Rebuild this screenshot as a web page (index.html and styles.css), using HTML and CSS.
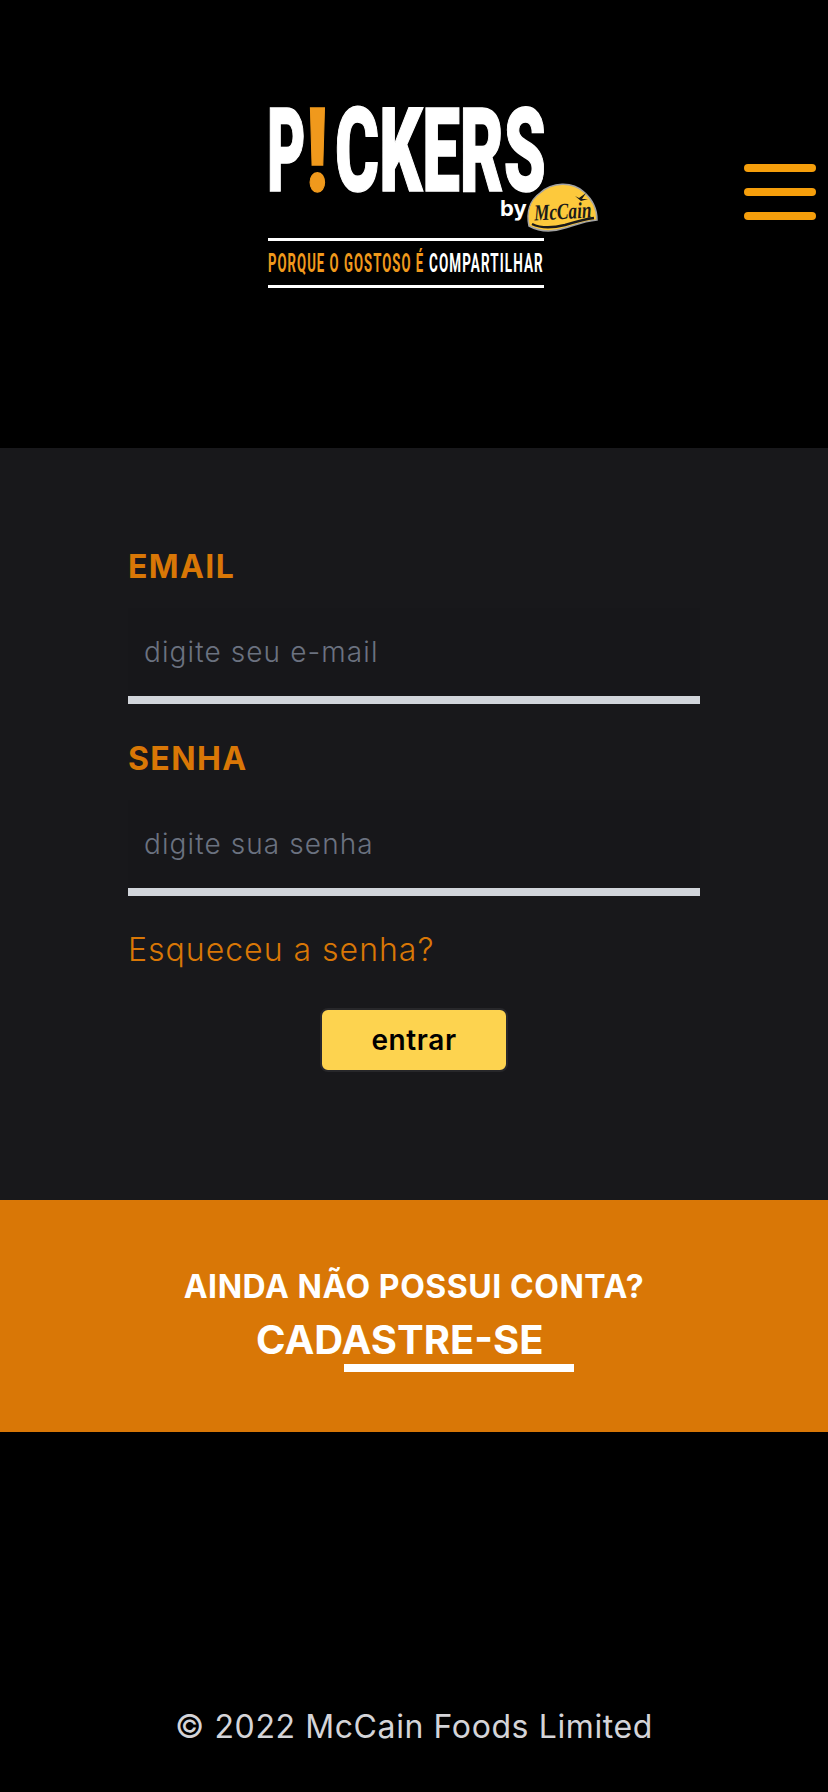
FILE: index.html
```html
<!DOCTYPE html>
<html lang="pt-BR">
<head>
    <meta charset="UTF-8">
    <meta name="viewport" content="width=device-width, initial-scale=1.0">
    <title>Pickers by McCain</title>
    <link rel="stylesheet" href="styles.css">
</head>
<body>
    <header class="site-header">
        <svg class="logo" viewBox="264 60 340 240" role="img" aria-label="Pickers by McCain">
            <text class="logo-word" transform="translate(267 191) scale(.51 1)">P</text>
            <text class="logo-mark" transform="translate(306 191) scale(.69 1)">!</text>
            <text class="logo-word" transform="translate(335 191) scale(.58 1)">CKERS</text>
            <text class="logo-by" x="500" y="216">by</text>
            <path class="dome" d="M529 226 C526 212 530 200 540 193 C552 182 572 181 584 192 C592 199 597 208 597 220 C585 221 575 225 565 228 C553 232 540 232 529 226 Z"/>
            <path class="dome-wave" d="M532 224 C542 229 553 228 565 225 C575 222 585 219 594 218"/>
            <path class="dome-bird" d="M575 196 L579 198 L586 193 L582 199 L588 199 L581 201 Z"/>
            <text class="logo-mccain" transform="rotate(-3 563 212) translate(534 219) scale(.75 1)">McCain</text>
            <rect class="logo-rule" x="268" y="238" width="276" height="3"/>
            <text class="logo-tag tag-orange" transform="translate(268 272) scale(.525 1)">PORQUE O GOSTOSO É</text>
            <text class="logo-tag" transform="translate(429 272) scale(.54 1)">COMPARTILHAR</text>
            <rect class="logo-rule" x="268" y="285" width="276" height="3"/>
        </svg>
        <button class="menu-toggle" type="button" aria-label="Menu">
            <span></span>
            <span></span>
            <span></span>
        </button>
    </header>

    <main class="login-section">
        <form class="login-form">
            <div class="form-group">
                <label for="email">EMAIL</label>
                <input type="email" id="email" name="email" placeholder="digite seu e-mail">
            </div>
            <div class="form-group">
                <label for="password">SENHA</label>
                <input type="password" id="password" name="password" placeholder="digite sua senha">
            </div>
            <a class="forgot-link" href="#">Esqueceu a senha?</a>
            <button class="submit-btn" type="submit">entrar</button>
        </form>
    </main>

    <section class="signup-band">
        <p class="signup-question">AINDA NÃO POSSUI CONTA?</p>
        <a class="signup-link" href="#">
            <span class="signup-text">CADASTRE-SE</span>
            <span class="signup-line"></span>
        </a>
    </section>

    <footer class="site-footer">© 2022 McCain Foods Limited</footer>
</body>
</html>
```

FILE: styles.css
```css
:root {
    --orange: #d97706;
    --panel: #18181b;
}

* {
    box-sizing: border-box;
}

body {
    margin: 0;
    min-height: 1792px;
    display: flex;
    flex-direction: column;
    background-color: #000;
    font-family: Inter, "Open Sans", sans-serif;
}

.site-header {
    height: 448px;
    padding: 60px 12px 0 264px;
    display: flex;
    justify-content: space-between;
    align-items: flex-start;
}

.logo {
    width: 340px;
    height: 240px;
}

.logo-word {
    font-family: Roboto, sans-serif;
    font-weight: 900;
    font-size: 116px;
    fill: #fff;
    stroke: #fff;
    stroke-width: 1.5;
}

.logo-mark {
    font-family: Roboto, sans-serif;
    font-weight: 900;
    font-size: 116px;
    fill: #f0991c;
    stroke: #f0991c;
    stroke-width: 1.5;
}

.logo-by {
    font-weight: 700;
    font-size: 22px;
    fill: #fff;
}

.dome {
    fill: #fdc93c;
    stroke: #a3a3a3;
    stroke-width: 1.5;
}

.dome-wave {
    fill: none;
    stroke: #1a1a1a;
    stroke-width: 2.5;
}

.dome-bird {
    fill: #1a1a1a;
}

.logo-mccain {
    font-family: "Liberation Serif", serif;
    font-weight: 700;
    font-style: italic;
    font-size: 23px;
    fill: #1a1a1a;
}

.logo-rule {
    fill: #fff;
}

.logo-tag {
    font-family: Roboto, sans-serif;
    font-weight: 700;
    font-size: 25px;
    letter-spacing: 2px;
    fill: #fff;
}

.tag-orange {
    fill: #f0991c;
}

.menu-toggle {
    width: 72px;
    margin-top: 104px;
    padding: 0;
    display: flex;
    flex-direction: column;
    gap: 16px;
    border: none;
    background: none;
}

.menu-toggle span {
    height: 8px;
    border-radius: 4px;
    background-color: #f59e0b;
}

.login-section {
    height: 752px;
    padding: 95px 128px 0;
    background-color: var(--panel);
}

.login-form {
    display: flex;
    flex-direction: column;
}

.form-group {
    margin-bottom: 31px;
}

.form-group label {
    display: block;
    height: 48px;
    margin-bottom: 17px;
    color: var(--orange);
    font-size: 32px;
    font-weight: 700;
    letter-spacing: 1.4px;
    line-height: 48px;
}

.form-group input {
    display: block;
    width: 100%;
    height: 96px;
    padding: 0 16px;
    border: none;
    border-bottom: 8px solid #d1d5db;
    border-radius: 0;
    outline: none;
    background-color: #17171a;
    color: #fff;
    font-family: inherit;
    font-size: 28px;
    font-weight: 300;
    letter-spacing: 1.1px;
}

.form-group input::placeholder {
    color: #6b7280;
    opacity: 1;
}

.forgot-link {
    height: 48px;
    margin-top: -1px;
    color: var(--orange);
    font-size: 32px;
    font-weight: 300;
    letter-spacing: 1px;
    line-height: 48px;
    text-decoration: none;
}

.submit-btn {
    width: 188px;
    height: 64px;
    margin: 34px auto 0;
    border: 2px solid #27272a;
    border-radius: 8px;
    background-color: #fdd34f;
    color: #000;
    font-family: inherit;
    font-size: 28px;
    font-weight: 600;
    letter-spacing: 0.6px;
}

.signup-band {
    height: 232px;
    padding-top: 67px;
    display: flex;
    flex-direction: column;
    align-items: center;
    background-color: var(--orange);
    color: #fff;
}

.signup-question {
    margin: 0;
    font-size: 32px;
    font-weight: 700;
    letter-spacing: 0.55px;
    line-height: 40px;
}

.signup-link {
    width: 320px;
    margin-top: 8px;
    display: flex;
    flex-direction: column;
    color: #fff;
    text-decoration: none;
}

.signup-text {
    padding-left: 2px;
    font-size: 40px;
    font-weight: 700;
    line-height: 49px;
}

.signup-line {
    width: 230px;
    height: 8px;
    align-self: flex-end;
    background-color: #fff;
}

.site-footer {
    flex: 1;
    padding-top: 271px;
    color: #d4d4d8;
    font-size: 32px;
    letter-spacing: 0.6px;
    line-height: 48px;
    text-align: center;
}
```
